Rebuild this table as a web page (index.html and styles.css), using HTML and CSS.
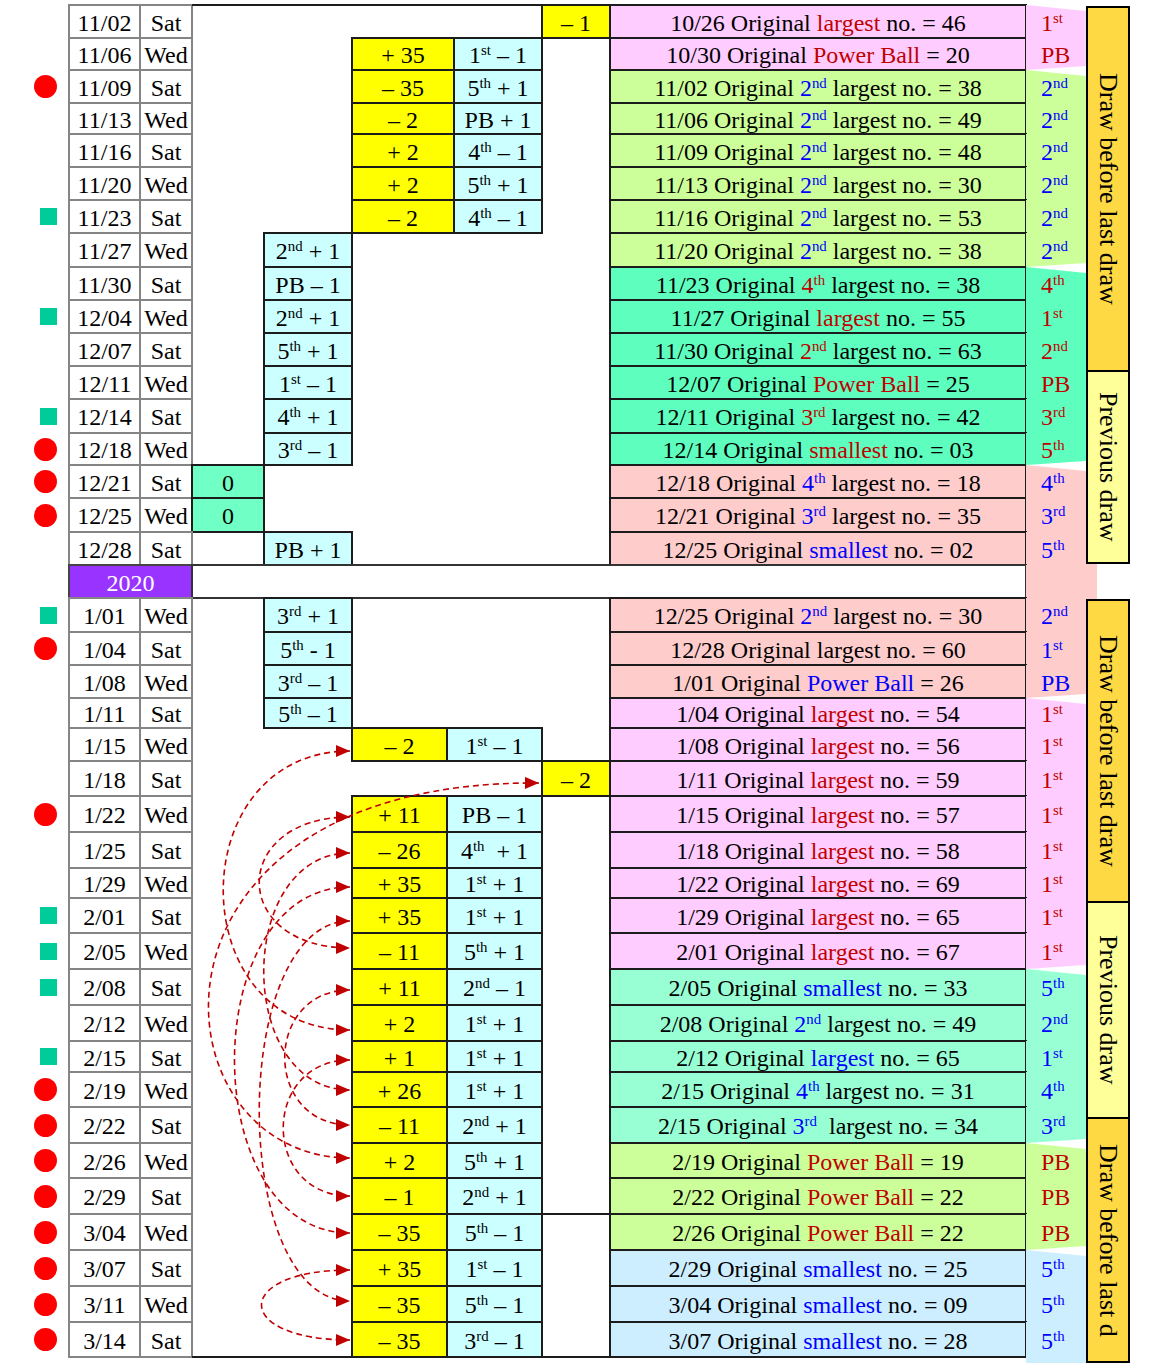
FILE: index.html
```html
<!DOCTYPE html>
<html>
<head>
<meta charset="utf-8">
<link rel="stylesheet" href="styles.css">
</head>
<body>
<div class="page">
  <div class="table">
    <!-- 1 -->
    <div class="row h33">
      <div class="mk"></div><div class="cell dt">11/02</div><div class="cell dy">Sat</div>
      <div class="blank s5 tline"></div><div class="cell yel">– 1</div>
      <div class="cell org pink"><span>10/26 Original <span class="r">largest</span> no. = 46</span></div>
      <div class="rk pink first r"><span>1<sup>st</sup></span></div>
    </div>
    <!-- 2 -->
    <div class="row h32">
      <div class="mk"></div><div class="cell dt">11/06</div><div class="cell dy">Wed</div>
      <div class="blank s2"></div><div class="cell yel s2">+ 35</div><div class="cell cy"><span>1<sup>st</sup> – 1</span></div><div class="blank"></div>
      <div class="cell org pink"><span>10/30 Original <span class="r">Power Ball</span> = 20</span></div>
      <div class="rk pink last r"><span>PB</span></div>
    </div>
    <!-- 3 -->
    <div class="row h33">
      <div class="mk"><span class="dot"></span></div><div class="cell dt">11/09</div><div class="cell dy">Sat</div>
      <div class="blank s2"></div><div class="cell yel s2">– 35</div><div class="cell cy"><span>5<sup>th</sup> + 1</span></div><div class="blank"></div>
      <div class="cell org green"><span>11/02 Original <span class="b">2<sup>nd</sup></span> largest no. = 38</span></div>
      <div class="rk green first b"><span>2<sup>nd</sup></span></div>
    </div>
    <!-- 4 -->
    <div class="row h31">
      <div class="mk"></div><div class="cell dt">11/13</div><div class="cell dy">Wed</div>
      <div class="blank s2"></div><div class="cell yel s2">– 2</div><div class="cell cy"><span>PB + 1</span></div><div class="blank"></div>
      <div class="cell org green"><span>11/06 Original <span class="b">2<sup>nd</sup></span> largest no. = 49</span></div>
      <div class="rk green b"><span>2<sup>nd</sup></span></div>
    </div>
    <!-- 5 -->
    <div class="row h33">
      <div class="mk"></div><div class="cell dt">11/16</div><div class="cell dy">Sat</div>
      <div class="blank s2"></div><div class="cell yel s2">+ 2</div><div class="cell cy"><span>4<sup>th</sup> – 1</span></div><div class="blank"></div>
      <div class="cell org green"><span>11/09 Original <span class="b">2<sup>nd</sup></span> largest no. = 48</span></div>
      <div class="rk green b"><span>2<sup>nd</sup></span></div>
    </div>
    <!-- 6 -->
    <div class="row h33">
      <div class="mk"></div><div class="cell dt">11/20</div><div class="cell dy">Wed</div>
      <div class="blank s2"></div><div class="cell yel s2">+ 2</div><div class="cell cy"><span>5<sup>th</sup> + 1</span></div><div class="blank"></div>
      <div class="cell org green"><span>11/13 Original <span class="b">2<sup>nd</sup></span> largest no. = 30</span></div>
      <div class="rk green b"><span>2<sup>nd</sup></span></div>
    </div>
    <!-- 7 -->
    <div class="row h33">
      <div class="mk"><span class="sq"></span></div><div class="cell dt">11/23</div><div class="cell dy">Sat</div>
      <div class="blank s2"></div><div class="cell yel s2">– 2</div><div class="cell cy"><span>4<sup>th</sup> – 1</span></div><div class="blank"></div>
      <div class="cell org green"><span>11/16 Original <span class="b">2<sup>nd</sup></span> largest no. = 53</span></div>
      <div class="rk green b"><span>2<sup>nd</sup></span></div>
    </div>
    <!-- 8 -->
    <div class="row h34">
      <div class="mk"></div><div class="cell dt">11/27</div><div class="cell dy">Wed</div>
      <div class="blank"></div><div class="cell cy"><span>2<sup>nd</sup> + 1</span></div><div class="blank s4"></div>
      <div class="cell org green"><span>11/20 Original <span class="b">2<sup>nd</sup></span> largest no. = 38</span></div>
      <div class="rk green last b"><span>2<sup>nd</sup></span></div>
    </div>
    <!-- 9 -->
    <div class="row h33">
      <div class="mk"></div><div class="cell dt">11/30</div><div class="cell dy">Sat</div>
      <div class="blank"></div><div class="cell cy"><span>PB – 1</span></div><div class="blank s4"></div>
      <div class="cell org mint"><span>11/23 Original <span class="r">4<sup>th</sup></span> largest no. = 38</span></div>
      <div class="rk mint first r"><span>4<sup>th</sup></span></div>
    </div>
    <!-- 10 -->
    <div class="row h33">
      <div class="mk"><span class="sq"></span></div><div class="cell dt">12/04</div><div class="cell dy">Wed</div>
      <div class="blank"></div><div class="cell cy"><span>2<sup>nd</sup> + 1</span></div><div class="blank s4"></div>
      <div class="cell org mint"><span>11/27 Original <span class="r">largest</span> no. = 55</span></div>
      <div class="rk mint r"><span>1<sup>st</sup></span></div>
    </div>
    <!-- 11 -->
    <div class="row h33">
      <div class="mk"></div><div class="cell dt">12/07</div><div class="cell dy">Sat</div>
      <div class="blank"></div><div class="cell cy"><span>5<sup>th</sup> + 1</span></div><div class="blank s4"></div>
      <div class="cell org mint"><span>11/30 Original <span class="r">2<sup>nd</sup></span> largest no. = 63</span></div>
      <div class="rk mint r"><span>2<sup>nd</sup></span></div>
    </div>
    <!-- 12 -->
    <div class="row h33">
      <div class="mk"></div><div class="cell dt">12/11</div><div class="cell dy">Wed</div>
      <div class="blank"></div><div class="cell cy"><span>1<sup>st</sup> – 1</span></div><div class="blank s4"></div>
      <div class="cell org mint"><span>12/07 Original <span class="r">Power Ball</span> = 25</span></div>
      <div class="rk mint r"><span>PB</span></div>
    </div>
    <!-- 13 -->
    <div class="row h34">
      <div class="mk"><span class="sq"></span></div><div class="cell dt">12/14</div><div class="cell dy">Sat</div>
      <div class="blank"></div><div class="cell cy"><span>4<sup>th</sup> + 1</span></div><div class="blank s4"></div>
      <div class="cell org mint"><span>12/11 Original <span class="r">3<sup>rd</sup></span> largest no. = 42</span></div>
      <div class="rk mint r"><span>3<sup>rd</sup></span></div>
    </div>
    <!-- 14 -->
    <div class="row h32">
      <div class="mk"><span class="dot"></span></div><div class="cell dt">12/18</div><div class="cell dy">Wed</div>
      <div class="blank"></div><div class="cell cy"><span>3<sup>rd</sup> – 1</span></div><div class="blank s4"></div>
      <div class="cell org mint"><span>12/14 Original <span class="r">smallest</span> no. = 03</span></div>
      <div class="rk mint last r"><span>5<sup>th</sup></span></div>
    </div>
    <!-- 15 -->
    <div class="row h33">
      <div class="mk"><span class="dot"></span></div><div class="cell dt">12/21</div><div class="cell dy">Sat</div>
      <div class="cell zero">0</div><div class="blank s5"></div>
      <div class="cell org salmon"><span>12/18 Original <span class="b">4<sup>th</sup></span> largest no. = 18</span></div>
      <div class="rk salmon first b"><span>4<sup>th</sup></span></div>
    </div>
    <!-- 16 -->
    <div class="row h34">
      <div class="mk"><span class="dot"></span></div><div class="cell dt">12/25</div><div class="cell dy">Wed</div>
      <div class="cell zero">0</div><div class="blank s5"></div>
      <div class="cell org salmon"><span>12/21 Original <span class="b">3<sup>rd</sup></span> largest no. = 35</span></div>
      <div class="rk salmon b"><span>3<sup>rd</sup></span></div>
    </div>
    <!-- 17 -->
    <div class="row h33">
      <div class="mk"></div><div class="cell dt">12/28</div><div class="cell dy">Sat</div>
      <div class="blank"></div><div class="cell cy"><span>PB + 1</span></div><div class="blank s4"></div>
      <div class="cell org salmon"><span>12/25 Original <span class="b">smallest</span> no. = 02</span></div>
      <div class="rk salmon b"><span>5<sup>th</sup></span></div>
    </div>
    <!-- 18 -->
    <div class="row h33">
      <div class="mk"></div><div class="cell year s2">2020</div>
      <div class="blank s7 boxed"></div>
      <div class="rk salmon"></div>
    </div>
    <!-- 19 -->
    <div class="row h34">
      <div class="mk"><span class="sq"></span></div><div class="cell dt">1/01</div><div class="cell dy">Wed</div>
      <div class="blank"></div><div class="cell cy"><span>3<sup>rd</sup> + 1</span></div><div class="blank s4"></div>
      <div class="cell org salmon"><span>12/25 Original <span class="b">2<sup>nd</sup></span> largest no. = 30</span></div>
      <div class="rk salmon b"><span>2<sup>nd</sup></span></div>
    </div>
    <!-- 20 -->
    <div class="row h33">
      <div class="mk"><span class="dot"></span></div><div class="cell dt">1/04</div><div class="cell dy">Sat</div>
      <div class="blank"></div><div class="cell cy"><span>5<sup>th</sup> - 1</span></div><div class="blank s4"></div>
      <div class="cell org salmon"><span>12/28 Original largest no. = 60</span></div>
      <div class="rk salmon b"><span>1<sup>st</sup></span></div>
    </div>
    <!-- 21 -->
    <div class="row h33">
      <div class="mk"></div><div class="cell dt">1/08</div><div class="cell dy">Wed</div>
      <div class="blank"></div><div class="cell cy"><span>3<sup>rd</sup> – 1</span></div><div class="blank s4"></div>
      <div class="cell org salmon"><span>1/01 Original <span class="b">Power Ball</span> = 26</span></div>
      <div class="rk salmon last b"><span>PB</span></div>
    </div>
    <!-- 22 -->
    <div class="row h30">
      <div class="mk"></div><div class="cell dt">1/11</div><div class="cell dy">Sat</div>
      <div class="blank"></div><div class="cell cy"><span>5<sup>th</sup> – 1</span></div><div class="blank s4"></div>
      <div class="cell org pink"><span>1/04 Original <span class="r">largest</span> no. = 54</span></div>
      <div class="rk pink first r"><span>1<sup>st</sup></span></div>
    </div>
    <!-- 23 -->
    <div class="row h33">
      <div class="mk"></div><div class="cell dt">1/15</div><div class="cell dy">Wed</div>
      <div class="blank s2"></div><div class="cell yel">– 2</div><div class="cell cy s2"><span>1<sup>st</sup> – 1</span></div><div class="blank"></div>
      <div class="cell org pink"><span>1/08 Original <span class="r">largest</span> no. = 56</span></div>
      <div class="rk pink r"><span>1<sup>st</sup></span></div>
    </div>
    <!-- 24 -->
    <div class="row h35">
      <div class="mk"></div><div class="cell dt">1/18</div><div class="cell dy">Sat</div>
      <div class="blank s5"></div><div class="cell yel">– 2</div>
      <div class="cell org pink"><span>1/11 Original <span class="r">largest</span> no. = 59</span></div>
      <div class="rk pink r"><span>1<sup>st</sup></span></div>
    </div>
    <!-- 25 -->
    <div class="row h36">
      <div class="mk"><span class="dot"></span></div><div class="cell dt">1/22</div><div class="cell dy">Wed</div>
      <div class="blank s2"></div><div class="cell yel">+ 11</div><div class="cell cy s2"><span>PB – 1</span></div><div class="blank"></div>
      <div class="cell org pink"><span>1/15 Original <span class="r">largest</span> no. = 57</span></div>
      <div class="rk pink r"><span>1<sup>st</sup></span></div>
    </div>
    <!-- 26 -->
    <div class="row h36">
      <div class="mk"></div><div class="cell dt">1/25</div><div class="cell dy">Sat</div>
      <div class="blank s2"></div><div class="cell yel">– 26</div><div class="cell cy s2"><span>4<sup>th</sup>&nbsp; + 1</span></div><div class="blank"></div>
      <div class="cell org pink"><span>1/18 Original <span class="r">largest</span> no. = 58</span></div>
      <div class="rk pink r"><span>1<sup>st</sup></span></div>
    </div>
    <!-- 27 -->
    <div class="row h30">
      <div class="mk"></div><div class="cell dt">1/29</div><div class="cell dy">Wed</div>
      <div class="blank s2"></div><div class="cell yel">+ 35</div><div class="cell cy s2"><span>1<sup>st</sup> + 1</span></div><div class="blank"></div>
      <div class="cell org pink"><span>1/22 Original <span class="r">largest</span> no. = 69</span></div>
      <div class="rk pink r"><span>1<sup>st</sup></span></div>
    </div>
    <!-- 28 -->
    <div class="row h35">
      <div class="mk"><span class="sq"></span></div><div class="cell dt">2/01</div><div class="cell dy">Sat</div>
      <div class="blank s2"></div><div class="cell yel">+ 35</div><div class="cell cy s2"><span>1<sup>st</sup> + 1</span></div><div class="blank"></div>
      <div class="cell org pink"><span>1/29 Original <span class="r">largest</span> no. = 65</span></div>
      <div class="rk pink r"><span>1<sup>st</sup></span></div>
    </div>
    <!-- 29 -->
    <div class="row h36">
      <div class="mk"><span class="sq"></span></div><div class="cell dt">2/05</div><div class="cell dy">Wed</div>
      <div class="blank s2"></div><div class="cell yel">– 11</div><div class="cell cy s2"><span>5<sup>th</sup> + 1</span></div><div class="blank"></div>
      <div class="cell org pink"><span>2/01 Original <span class="r">largest</span> no. = 67</span></div>
      <div class="rk pink last r"><span>1<sup>st</sup></span></div>
    </div>
    <!-- 30 -->
    <div class="row h36">
      <div class="mk"><span class="sq"></span></div><div class="cell dt">2/08</div><div class="cell dy">Sat</div>
      <div class="blank s2"></div><div class="cell yel">+ 11</div><div class="cell cy s2"><span>2<sup>nd</sup> – 1</span></div><div class="blank"></div>
      <div class="cell org mint2"><span>2/05 Original <span class="b">smallest</span> no. = 33</span></div>
      <div class="rk mint2 first b"><span>5<sup>th</sup></span></div>
    </div>
    <!-- 31 -->
    <div class="row h36">
      <div class="mk"></div><div class="cell dt">2/12</div><div class="cell dy">Wed</div>
      <div class="blank s2"></div><div class="cell yel">+ 2</div><div class="cell cy s2"><span>1<sup>st</sup> + 1</span></div><div class="blank"></div>
      <div class="cell org mint2"><span>2/08 Original <span class="b">2<sup>nd</sup></span> largest no. = 49</span></div>
      <div class="rk mint2 b"><span>2<sup>nd</sup></span></div>
    </div>
    <!-- 32 -->
    <div class="row h31">
      <div class="mk"><span class="sq"></span></div><div class="cell dt">2/15</div><div class="cell dy">Sat</div>
      <div class="blank s2"></div><div class="cell yel">+ 1</div><div class="cell cy s2"><span>1<sup>st</sup> + 1</span></div><div class="blank"></div>
      <div class="cell org mint2"><span>2/12 Original <span class="b">largest</span> no. = 65</span></div>
      <div class="rk mint2 b"><span>1<sup>st</sup></span></div>
    </div>
    <!-- 33 -->
    <div class="row h35">
      <div class="mk"><span class="dot"></span></div><div class="cell dt">2/19</div><div class="cell dy">Wed</div>
      <div class="blank s2"></div><div class="cell yel">+ 26</div><div class="cell cy s2"><span>1<sup>st</sup> + 1</span></div><div class="blank"></div>
      <div class="cell org mint2"><span>2/15 Original <span class="b">4<sup>th</sup></span> largest no. = 31</span></div>
      <div class="rk mint2 b"><span>4<sup>th</sup></span></div>
    </div>
    <!-- 34 -->
    <div class="row h36">
      <div class="mk"><span class="dot"></span></div><div class="cell dt">2/22</div><div class="cell dy">Sat</div>
      <div class="blank s2"></div><div class="cell yel">– 11</div><div class="cell cy s2"><span>2<sup>nd</sup> + 1</span></div><div class="blank"></div>
      <div class="cell org mint2"><span>2/15 Original <span class="b">3<sup>rd</sup></span>&nbsp; largest no. = 34</span></div>
      <div class="rk mint2 last b"><span>3<sup>rd</sup></span></div>
    </div>
    <!-- 35 -->
    <div class="row h35">
      <div class="mk"><span class="dot"></span></div><div class="cell dt">2/26</div><div class="cell dy">Wed</div>
      <div class="blank s2"></div><div class="cell yel">+ 2</div><div class="cell cy s2"><span>5<sup>th</sup> + 1</span></div><div class="blank"></div>
      <div class="cell org green"><span>2/19 Original <span class="r">Power Ball</span> = 19</span></div>
      <div class="rk green first r"><span>PB</span></div>
    </div>
    <!-- 36 -->
    <div class="row h36">
      <div class="mk"><span class="dot"></span></div><div class="cell dt">2/29</div><div class="cell dy">Sat</div>
      <div class="blank s2"></div><div class="cell yel">– 1</div><div class="cell cy s2"><span>2<sup>nd</sup> + 1</span></div><div class="blank"></div>
      <div class="cell org green"><span>2/22 Original <span class="r">Power Ball</span> = 22</span></div>
      <div class="rk green r"><span>PB</span></div>
    </div>
    <!-- 37 -->
    <div class="row h36">
      <div class="mk"><span class="dot"></span></div><div class="cell dt">3/04</div><div class="cell dy">Wed</div>
      <div class="blank s2"></div><div class="cell yel">– 35</div><div class="cell cy s2"><span>5<sup>th</sup> – 1</span></div><div class="blank tline"></div>
      <div class="cell org green"><span>2/26 Original <span class="r">Power Ball</span> = 22</span></div>
      <div class="rk green last r"><span>PB</span></div>
    </div>
    <!-- 38 -->
    <div class="row h36">
      <div class="mk"><span class="dot"></span></div><div class="cell dt">3/07</div><div class="cell dy">Sat</div>
      <div class="blank s2"></div><div class="cell yel">+ 35</div><div class="cell cy s2"><span>1<sup>st</sup> – 1</span></div><div class="blank"></div>
      <div class="cell org lblue"><span>2/29 Original <span class="b">smallest</span> no. = 25</span></div>
      <div class="rk lblue first b"><span>5<sup>th</sup></span></div>
    </div>
    <!-- 39 -->
    <div class="row h36">
      <div class="mk"><span class="dot"></span></div><div class="cell dt">3/11</div><div class="cell dy">Wed</div>
      <div class="blank s2"></div><div class="cell yel">– 35</div><div class="cell cy s2"><span>5<sup>th</sup> – 1</span></div><div class="blank"></div>
      <div class="cell org lblue"><span>3/04 Original <span class="b">smallest</span> no. = 09</span></div>
      <div class="rk lblue b"><span>5<sup>th</sup></span></div>
    </div>
    <!-- 40 -->
    <div class="row h35">
      <div class="mk"><span class="dot"></span></div><div class="cell dt">3/14</div><div class="cell dy">Sat</div>
      <div class="blank s2 bline"></div><div class="cell yel">– 35</div><div class="cell cy s2"><span>3<sup>rd</sup> – 1</span></div><div class="blank bline"></div>
      <div class="cell org lblue"><span>3/07 Original <span class="b">smallest</span> no. = 28</span></div>
      <div class="rk lblue lastb b"><span>5<sup>th</sup></span></div>
    </div>
  </div>

  <div class="labels">
    <div class="lab gold l1">Draw before last draw</div>
    <div class="lab lyel l2">Previous draw</div>
    <div class="gap"></div>
    <div class="lab gold l3">Draw before last draw</div>
    <div class="lab lyel l4">Previous draw</div>
    <div class="lab gold l5">Draw before last d</div>
  </div>

  <svg class="arrows" width="1156" height="1368" viewBox="0 0 1156 1368">
    <defs>
      <marker id="ah" markerUnits="userSpaceOnUse" markerWidth="14" markerHeight="12" viewBox="0 0 14 12" refX="14" refY="6" orient="auto-start-reverse">
        <path d="M0,0 L14,6 L0,12 z" fill="#c00000"/>
      </marker>
    </defs>
    <g class="arc">
      <path d="M350,751 C181,751 181,1030 350,1030"/>
      <path d="M539,783 C120,780 150,1158 350,1158"/>
      <path d="M350,817 C229,817 229,948 350,948"/>
      <path d="M350,853 C235,853 235,1090 350,1090"/>
      <path d="M350,887 C196,887 196,1233 350,1233"/>
      <path d="M350,921 C229,921 229,1301 350,1301"/>
      <path d="M350,990 C263,990 263,1125 350,1125"/>
      <path d="M350,1060 C261,1060 261,1196 350,1196"/>
      <path d="M350,1270 C232,1270 232,1340 350,1340"/>
    </g>
  </svg>
</div>
</body>
</html>
```
FILE: styles.css
```css
body {
  margin: 0;
  background: #fff;
  color: #000;
  font-family: "Liberation Serif", "Times New Roman", serif;
  font-size: 24px;
}

.page {
  position: relative;
  display: flex;
  align-items: flex-start;
  padding-top: 5px;
  width: 1156px;
}

.table {
  width: 1086px;
  flex: none;
}

.row {
  display: grid;
  grid-template-columns: 69px 71px 52px 72px 88px 95px 7px 88px 68px 416px 60px;
}

.h30 { height: 30px; }
.h31 { height: 31px; }
.h32 { height: 32px; }
.h33 { height: 33px; }
.h34 { height: 34px; }
.h35 { height: 35px; }
.h36 { height: 36px; }

.s2 { grid-column: span 2; }
.s4 { grid-column: span 4; }
.s5 { grid-column: span 5; }
.s7 { grid-column: span 7; }

.mk {
  display: flex;
  align-items: center;
  justify-content: flex-end;
  padding-right: 12px;
}

.dot {
  width: 23px;
  height: 23px;
  border-radius: 50%;
  background: #ff0000;
}

.sq {
  width: 17px;
  height: 17px;
  background: #00cc99;
}

.cell {
  display: flex;
  align-items: center;
  justify-content: center;
  padding-top: 3px;
  box-sizing: border-box;
  white-space: nowrap;
  outline: 2px solid #1c1c1c;
  outline-offset: -1px;
}

.dt, .dy {
  outline-color: #858585;
}

.year {
  background: #9933ff;
  color: #fff;
  outline-color: #444;
}

.yel { background: #ffff00; }
.cy { background: #ccffff; }
.zero { background: #70ffc4; }

.pink { background: #ffccff; }
.green { background: #ccff99; }
.mint { background: #5effbe; }
.salmon { background: #ffcccc; }
.mint2 { background: #98ffd4; }
.lblue { background: #cdeeff; }

.boxed {
  outline: 2px solid #333;
  outline-offset: -1px;
}

.tline {
  box-shadow: 0 -1px 0 #1c1c1c, inset 0 1px 0 #1c1c1c;
}

.bline {
  box-shadow: 0 1px 0 #1c1c1c, inset 0 -1px 0 #1c1c1c;
}

.r { color: #c00000; }
.b { color: #0000ff; }

sup {
  font-size: 62%;
  line-height: 0;
  vertical-align: 0.55em;
}

.rk {
  display: flex;
  align-items: center;
  padding-left: 15px;
  padding-top: 3px;
  box-sizing: border-box;
  white-space: nowrap;
}

.rk.first {
  clip-path: polygon(0 0, 100% 6px, 100% 100%, 0 100%);
}

.rk.last {
  clip-path: polygon(0 0, 100% 0, 100% calc(100% - 4px), 0 100%);
}

.rk.lastb {
  margin-bottom: -10px;
  padding-bottom: 10px;
}

.labels {
  flex: none;
  width: 44px;
  display: flex;
  flex-direction: column;
  padding-top: 1px;
}

.lab {
  box-sizing: border-box;
  border: 2px solid #000;
  writing-mode: vertical-rl;
  display: flex;
  align-items: center;
  justify-content: center;
  font-size: 26px;
  white-space: nowrap;
}

.gold { background: #ffd944; }
.lyel { background: #ffff99; }

.l1 { height: 366px; }
.l2 { height: 192px; border-top: none; }
.gap {
  height: 35px;
  background: linear-gradient(90deg, #ffcccc 0 11px, transparent 11px);
}
.l3 { height: 304px; }
.l4 { height: 216px; border-top: none; }
.l5 { height: 244px; border-top: none; }

.arrows {
  position: absolute;
  top: 0;
  left: 0;
  pointer-events: none;
  overflow: visible;
}

.arc path {
  fill: none;
  stroke: #c00000;
  stroke-width: 1.6;
  stroke-dasharray: 6 4;
  marker-start: url(#ah);
  marker-end: url(#ah);
}
```
